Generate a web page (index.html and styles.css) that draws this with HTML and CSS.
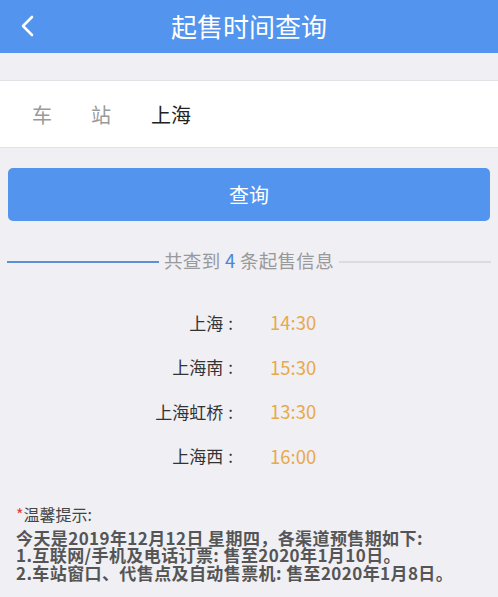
FILE: index.html
```html
<!DOCTYPE html>
<html>
<head>
<meta charset="UTF-8">
<meta name="viewport" content="width=device-width, initial-scale=1.0">
<title>起售时间查询</title>
<link rel="stylesheet" href="styles.css">
</head>
<body>

<div class="header">
    <a class="back">
        <svg width="16" height="22" viewBox="0 0 16 22"><path d="M13 2 L4 11 L13 20" fill="none" stroke="#fff" stroke-width="2.6" stroke-linecap="round" stroke-linejoin="round"/></svg>
    </a>
    <div class="title">起售时间查询</div>
</div>

<div class="field">
    <span class="label">车<i></i>站</span>
    <span class="value">上海</span>
</div>

<div class="btn">查询</div>

<div class="divider">
    <span class="line blue"></span>
    <span class="count">共查到 <b>4</b> 条起售信息</span>
    <span class="line"></span>
</div>

<div class="list">
    <div class="row"><span class="name">上海<s>:</s></span><span class="time">14:30</span></div>
    <div class="row"><span class="name">上海南<s>:</s></span><span class="time">15:30</span></div>
    <div class="row"><span class="name">上海虹桥<s>:</s></span><span class="time">13:30</span></div>
    <div class="row"><span class="name">上海西<s>:</s></span><span class="time">16:00</span></div>
</div>

<div class="tips">
    <p class="tip-title"><em>*</em>温馨提示:</p>
    <p>今天是2019年12月12日 星期四，各渠道预售期如下:</p>
    <p>1.互联网/手机及电话订票: 售至2020年1月10日。</p>
    <p>2.车站窗口、代售点及自动售票机: 售至2020年1月8日。</p>
</div>

</body>
</html>
```

FILE: styles.css
```css
* {
margin: 0;
padding: 0;
box-sizing: border-box;
}

html,body{
height: 100%;
background-color: #efeff4;
font-family: "Noto Sans CJK SC", "Noto Sans", sans-serif;
color: #333;
}

.header{
height: 53px;
background-color: #5294ee;
display: flex;
align-items: center;
justify-content: center;
position: relative;
}

.back{
position: absolute;
left: 19px;
top: 15px;
display: block;
}

.title{
color: #fff;
font-size: 26px;
margin-top: -2px;
}

.field{
margin-top: 27px;
height: 68px;
background: #fff;
border-top: 1px solid #e2e2e6;
border-bottom: 1px solid #e2e2e6;
display: flex;
align-items: center;
padding-left: 32px;
font-size: 20px;
}

.label{
color: #9a9a9a;
display: flex;
}

.label i{
width: 39px;
}

.value{
margin-left: 40px;
color: #222;
}

.btn{
margin: 20px 8px 0;
height: 53px;
border-radius: 5px;
background-color: #5294ee;
color: #fff;
font-size: 20px;
display: flex;
align-items: center;
justify-content: center;
}

.divider{
margin: 24px 7px 0;
display: flex;
align-items: center;
height: 30px;
}

.line{
flex: 1;
height: 2px;
background: #dcdce0;
margin-top: 4px;
}

.line.blue{
background: #5d8fd6;
height: 1.5px;
}

.count{
font-size: 18.5px;
color: #999;
padding: 0 5px;
letter-spacing: 0.3px;
}

.count b{
font-weight: normal;
color: #4a86d8;
}

.list{
margin-top: 25px;
}

.row{
display: flex;
height: 44.5px;
align-items: center;
}

.name{
width: 233px;
text-align: right;
color: #333;
font-size: 17px;
}

.name s{
text-decoration: none;
margin-left: 5px;
}

.time{
margin-left: 37px;
color: #e9a94a;
font-size: 18.5px;
}

.tips{
margin-top: 28px;
padding-left: 16px;
font-size: 17px;
line-height: 17.5px;
letter-spacing: 0.4px;
color: #555;
}

.tips p{
font-weight: bold;
}

.tips .tip-title{
font-weight: normal;
font-size: 16px;
letter-spacing: 0;
color: #444;
margin-bottom: 5px;
}

.tips em{
font-style: normal;
color: #e03c3c;
}
```
